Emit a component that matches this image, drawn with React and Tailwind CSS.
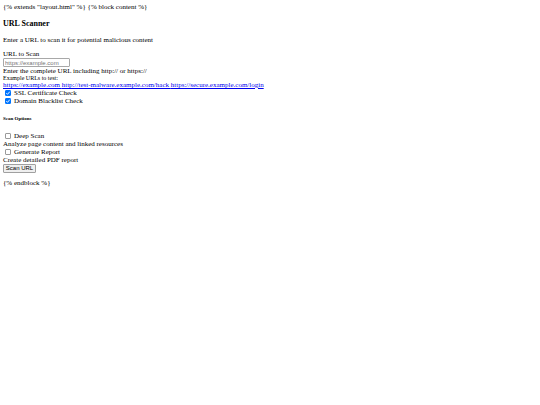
const links = [
  'https://example.com',
  'http://test-malware.example.com/hack',
  'https://secure.example.com/login',
];

function CheckOption({ id, label, checked = false }) {
  return (
    <div className="flex h-2 items-center gap-[3px] pl-[2px]">
      <span className="grid size-[6px] shrink-0">
        <input
          id={id}
          type="checkbox"
          defaultChecked={checked}
          className="peer col-start-1 row-start-1 m-0 size-[6px] appearance-none rounded-[1px] border border-[#9a9a9a] bg-white checked:border-[#0075ff] checked:bg-[#0075ff]"
        />
        <svg
          viewBox="0 0 13 13"
          className="pointer-events-none invisible col-start-1 row-start-1 size-[6px] peer-checked:visible"
          aria-hidden="true"
        >
          <path d="M2.8 6.8 5.4 9.4 10.4 3.5" fill="none" stroke="#fff" strokeWidth="2" />
        </svg>
      </span>
      <label htmlFor={id}>{label}</label>
    </div>
  );
}

export default function App() {
  return (
    <div className="bg-white p-[3px] font-['Liberation_Serif',serif] text-[7px] leading-[8px] text-black">
      <p>{'{% extends "layout.html" %} {% block content %}'}</p>
      <h3 className="mt-2 text-[8px] leading-[9px] font-bold">URL Scanner</h3>
      <p className="mt-2">Enter a URL to scan it for potential malicious content</p>

      <form className="mt-[6px]" onSubmit={(e) => e.preventDefault()}>
        <label htmlFor="url" className="block">URL to Scan</label>
        <input
          id="url"
          type="url"
          placeholder="https://example.com"
          className="block h-[9px] w-[67px] rounded-[1px] border border-[#a8a8a8] bg-white px-px font-['Liberation_Sans',sans-serif] text-[6px] leading-[7px] placeholder:text-[#757575]"
        />
        <p>Enter the complete URL including http:// or https://</p>
        <p className="text-[6px] leading-[6px]">Example URLs to test:</p>
        <p className="text-[#0000ee]">
          {links.map((url) => (
            <a key={url} href={url} className="underline">{url + ' '}</a>
          ))}
        </p>
        <CheckOption id="ssl" label="SSL Certificate Check" checked />
        <CheckOption id="blacklist" label="Domain Blacklist Check" checked />

        <h6 className="my-[11px] text-[5px] leading-[5px] font-bold">Scan Options</h6>

        <CheckOption id="deep" label="Deep Scan" />
        <p>Analyze page content and linked resources</p>
        <CheckOption id="report" label="Generate Report" />
        <p>Create detailed PDF report</p>
        <button
          type="submit"
          className="block h-[9px] w-[33px] rounded-[1px] border border-[#a0a0a0] bg-[#efefef] text-center font-['Liberation_Sans',sans-serif] text-[6px] leading-[7px]"
        >
          Scan URL
        </button>
      </form>

      <p className="mt-[6px]">{'{% endblock %}'}</p>
    </div>
  );
}
